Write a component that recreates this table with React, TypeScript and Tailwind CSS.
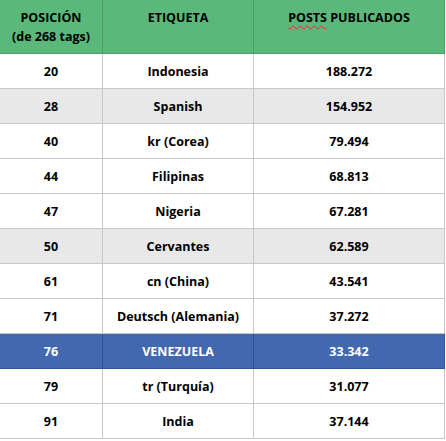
const rows = [
    { pos: '20', tag: 'Indonesia', posts: '188.272', tone: 'white' },
    { pos: '28', tag: 'Spanish', posts: '154.952', tone: 'gray' },
    { pos: '40', tag: 'kr (Corea)', posts: '79.494', tone: 'white' },
    { pos: '44', tag: 'Filipinas', posts: '68.813', tone: 'white' },
    { pos: '47', tag: 'Nigeria', posts: '67.281', tone: 'white' },
    { pos: '50', tag: 'Cervantes', posts: '62.589', tone: 'gray' },
    { pos: '61', tag: 'cn (China)', posts: '43.541', tone: 'white' },
    { pos: '71', tag: 'Deutsch (Alemania)', posts: '37.272', tone: 'white' },
    { pos: '76', tag: 'VENEZUELA', posts: '33.342', tone: 'blue' },
    { pos: '79', tag: 'tr (Turquía)', posts: '31.077', tone: 'white' },
    { pos: '91', tag: 'India', posts: '37.144', tone: 'white' },
];

const rowStyles: Record<string, string> = {
    white: 'bg-white text-black border-[#c8c8c8]',
    gray: 'bg-[#e8e8e8] text-black border-[#c8c8c8]',
    blue: 'bg-[#4269b0] text-white border-[#2f5597]',
};

const App = () => {
    return (
        <div
            className="w-[446px] h-[441px] bg-white"
            style={{ fontFamily: '"Open Sans", "Noto Sans", sans-serif' }}
        >
            <div className="w-[445px] text-[12.5px] font-bold leading-[17px]">
                {/* Cabecera */}
                <div className="grid h-[54px] grid-cols-[103px_151px_191px] border-b border-[#4f9f6c] bg-[#59b87a] text-black">
                    <div className="flex flex-col items-center border-r border-[#4f9f6c] pt-[9px]">
                        <span>POSICIÓN</span>
                        <span className="mt-[2px]">(de 268 tags)</span>
                    </div>
                    <div className="flex justify-center border-r border-[#4f9f6c] pt-[9px]">
                        ETIQUETA
                    </div>
                    <div className="flex justify-center border-r border-[#4f9f6c] pt-[9px]">
                        <span>
                            <span className="underline decoration-wavy decoration-[#e03030] decoration-1 underline-offset-[3px]">
                                POSTS
                            </span>{' '}
                            PUBLICADOS
                        </span>
                    </div>
                </div>

                {/* Filas */}
                {rows.map((row) => (
                    <div
                        key={row.pos}
                        className={`grid h-[35px] grid-cols-[103px_151px_191px] border-b ${rowStyles[row.tone]}`}
                    >
                        <div className={`flex items-center justify-center border-r ${rowStyles[row.tone]}`}>
                            {row.pos}
                        </div>
                        <div className={`flex items-center justify-center border-r ${rowStyles[row.tone]}`}>
                            {row.tag}
                        </div>
                        <div className={`flex items-center justify-center border-r ${rowStyles[row.tone]}`}>
                            {row.posts}
                        </div>
                    </div>
                ))}
            </div>
        </div>
    );
};

export default App;
